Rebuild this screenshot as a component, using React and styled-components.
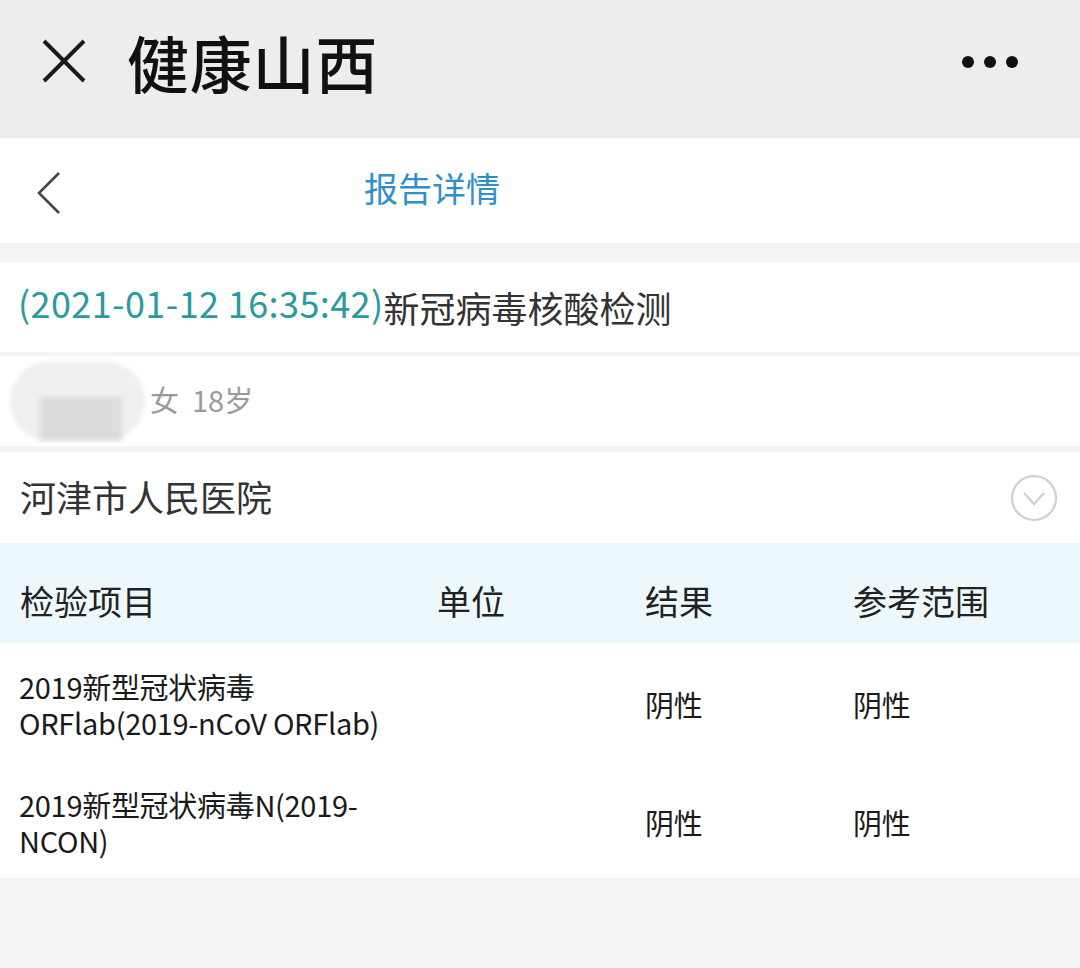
import styled, { createGlobalStyle } from 'styled-components';

const GlobalStyle = createGlobalStyle`
  body {
    margin: 0;
    background: #f4f4f4;
    font-family: "Noto Sans CJK SC", "Noto Sans", sans-serif;
  }
`;

const rows = [
  { lines: ['2019新型冠状病毒', 'ORFlab(2019-nCoV ORFlab)'], unit: '', result: '阴性', range: '阴性', height: 122 },
  { lines: ['2019新型冠状病毒N(2019-', 'NCON)'], unit: '', result: '阴性', range: '阴性', height: 113 },
];

const App = () => {
  return (
    <Page>
      <GlobalStyle />
      <TopBar>
        <CloseIcon viewBox="0 0 44 44">
          <path d="M2 2 L42 42 M42 2 L2 42" stroke="#1a1a1a" strokeWidth="4" />
        </CloseIcon>
        <AppTitle>健康山西</AppTitle>
        <Dots>
          <span />
          <span />
          <span />
        </Dots>
      </TopBar>

      <NavBar>
        <BackIcon viewBox="0 0 26 44">
          <path d="M23 2 L3 22 L23 42" stroke="#444" strokeWidth="2.6" fill="none" />
        </BackIcon>
        <NavTitle>报告详情</NavTitle>
      </NavBar>

      <Card $top={19}>
        <TestTitle>
          <span className="time">(2021-01-12 16:35:42)</span>
          <span className="name">新冠病毒核酸检测</span>
        </TestTitle>
      </Card>

      <Card $top={4}>
        <PersonRow>
          <Avatar>
            <div className="inner" />
          </Avatar>
          <PersonInfo>女&nbsp; 18岁</PersonInfo>
        </PersonRow>
      </Card>

      <Card $top={6}>
        <HospitalRow>
          <span>河津市人民医院</span>
          <ExpandIcon viewBox="0 0 48 48">
            <circle cx="24" cy="24" r="22" stroke="#cfcfcf" strokeWidth="2.2" fill="none" />
            <path d="M14 19 L24 30 L34 19" stroke="#cfcfcf" strokeWidth="2.2" fill="none" />
          </ExpandIcon>
        </HospitalRow>
      </Card>

      <Table>
        <HeadRow>
          <div>检验项目</div>
          <div>单位</div>
          <div>结果</div>
          <div>参考范围</div>
        </HeadRow>
        {rows.map((r, i) => (
          <BodyRow key={i} $h={r.height}>
            <div>
              {r.lines.map((l, j) => (
                <div key={j}>{l}</div>
              ))}
            </div>
            <div>{r.unit}</div>
            <div>{r.result}</div>
            <div>{r.range}</div>
          </BodyRow>
        ))}
      </Table>
    </Page>
  );
};

export default App;

const Page = styled.div`
  width: 1080px;
  min-height: 968px;
  background: #f4f4f4;
`;

const TopBar = styled.div`
  height: 138px;
  background: #ededed;
  display: flex;
  align-items: center;
  padding: 0 40px 0 42px;
  box-sizing: border-box;
`;

const CloseIcon = styled.svg`
  width: 44px;
  height: 44px;
  margin-top: -16px;
`;

const AppTitle = styled.div`
  margin-left: 41px;
  margin-top: -14px;
  font-size: 62px;
  font-weight: 500;
  color: #111;
  letter-spacing: 0.8px;
`;

const Dots = styled.div`
  margin-left: auto;
  margin-right: 22px;
  margin-top: -14px;
  display: flex;
  gap: 10px;
  span {
    width: 12px;
    height: 12px;
    border-radius: 50%;
    background: #111;
  }
`;

const NavBar = styled.div`
  height: 105px;
  background: #fff;
  display: flex;
  align-items: center;
  padding-left: 36px;
`;

const BackIcon = styled.svg`
  width: 26px;
  height: 44px;
  margin-top: 4px;
`;

const NavTitle = styled.div`
  margin-left: 302px;
  font-size: 34px;
  color: #2f8fc9;
  margin-top: -6px;
`;

const Card = styled.div`
  margin-top: ${(p) => p.$top}px;
  background: #fff;
`;

const TestTitle = styled.div`
  height: 90px;
  display: flex;
  align-items: center;
  padding-left: 18px;
  .time {
    font-size: 36px;
    color: #2b9a9f;
    letter-spacing: 0.4px;
    margin-top: -10px;
  }
  .name {
    font-size: 36px;
    color: #333;
  }
`;

const PersonRow = styled.div`
  height: 90px;
  display: flex;
  align-items: center;
  overflow: hidden;
`;

const Avatar = styled.div`
  margin-left: 10px;
  width: 135px;
  height: 80px;
  border-radius: 40px;
  background: #efefef;
  filter: blur(2px);
  position: relative;
  .inner {
    position: absolute;
    left: 30px;
    top: 36px;
    width: 82px;
    height: 44px;
    background: #dcdcdc;
  }
`;

const PersonInfo = styled.div`
  margin-left: 5px;
  font-size: 29px;
  color: #9a9a9a;
  margin-top: -4px;
`;

const HospitalRow = styled.div`
  height: 91px;
  display: flex;
  align-items: center;
  justify-content: space-between;
  padding: 0 22px 0 20px;
  span {
    font-size: 36px;
    color: #333;
    margin-top: -4px;
  }
`;

const ExpandIcon = styled.svg`
  width: 48px;
  height: 48px;
`;

const Table = styled.div`
  background: #fff;
`;

const HeadRow = styled.div`
  height: 100px;
  box-sizing: border-box;
  padding-top: 14px;
  background: #ecf8fc;
  display: grid;
  grid-template-columns: 417px 208px 208px 1fr;
  align-items: center;
  padding-left: 20px;
  font-size: 34px;
  color: #222;
`;

const BodyRow = styled.div`
  height: ${(p) => p.$h}px;
  display: grid;
  grid-template-columns: 418px 208px 208px 1fr;
  align-items: center;
  padding-left: 19px;
  font-size: 29px;
  line-height: 36px;
  color: #1a1a1a;
  letter-spacing: -0.3px;
`;
